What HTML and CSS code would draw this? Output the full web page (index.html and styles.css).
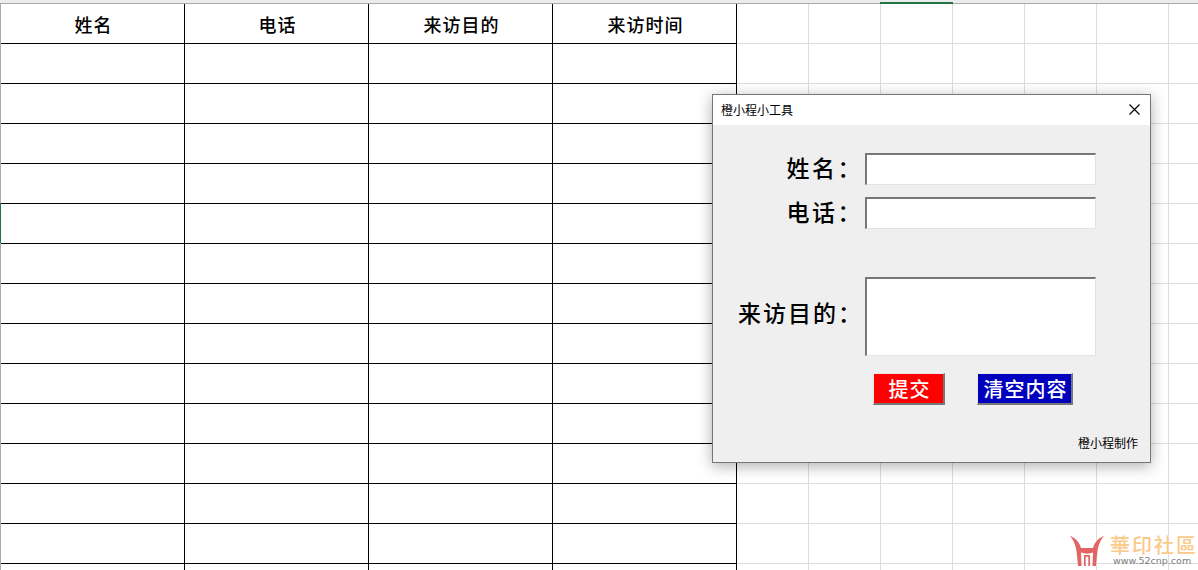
FILE: index.html
```html
<!DOCTYPE html>
<html lang="zh-CN">
<head>
<meta charset="utf-8">
<title>橙小程小工具</title>
<link rel="stylesheet" href="styles.css">
</head>
<body>
<div class="sheet">
  <div class="col-strip"><span class="col-marker"></span></div>
  <div class="sheet-body">
    <div class="row-strip"><span class="row-marker"></span></div>
    <table class="visitors">
      <thead>
        <tr><th>姓名</th><th>电话</th><th>来访目的</th><th>来访时间</th></tr>
      </thead>
      <tbody>
        <tr><td></td><td></td><td></td><td></td></tr>
        <tr><td></td><td></td><td></td><td></td></tr>
        <tr><td></td><td></td><td></td><td></td></tr>
        <tr><td></td><td></td><td></td><td></td></tr>
        <tr><td></td><td></td><td></td><td></td></tr>
        <tr><td></td><td></td><td></td><td></td></tr>
        <tr><td></td><td></td><td></td><td></td></tr>
        <tr><td></td><td></td><td></td><td></td></tr>
        <tr><td></td><td></td><td></td><td></td></tr>
        <tr><td></td><td></td><td></td><td></td></tr>
        <tr><td></td><td></td><td></td><td></td></tr>
        <tr><td></td><td></td><td></td><td></td></tr>
        <tr><td></td><td></td><td></td><td></td></tr>
        <tr><td></td><td></td><td></td><td></td></tr>
      </tbody>
    </table>
  </div>
</div>

<section class="dialog">
  <header class="dialog-title">
    <span>橙小程小工具</span>
    <svg class="close" width="11" height="11" viewBox="0 0 11 11"><path d="M.5.5l10 10M10.500.5l-10 10" stroke="#000" stroke-width="1.150" fill="none"/></svg>
  </header>
  <div class="dialog-body">
    <div class="form">
      <label class="label">姓名：</label><div class="input"></div>
      <label class="label">电话：</label><div class="input"></div>
      <label class="label label-area">来访目的：</label><div class="input area"></div>
    </div>
    <div class="actions">
      <button class="btn btn-red">提交</button>
      <button class="btn btn-blue">清空内容</button>
    </div>
    <div class="credit">橙小程制作</div>
  </div>
</section>

<div class="watermark">
  <svg class="wm-logo" width="36" height="32" viewBox="0 0 36 32">
    <path d="M1 1C6 3 10 6 12 13H24C26 6 30 3 35 1C31 6 29.500 10 28.500 16C28 21 27.500 26 27 31L23.500 31L24 17.500C20 19 16 19 12 17.500L12.500 31H9C8.500 26 8 21 7.500 16C6.500 10 5 6 1 1Z" fill="#e26464"/>
    <path d="M15 20H21V31H19.300V21.800H16.700V31H15Z" fill="#e26464"/>
  </svg>
  <div class="wm-text">
    <div class="wm-name">華印社區</div>
    <div class="wm-url">www.52cnp.com</div>
  </div>
</div>
</body>
</html>
```
FILE: styles.css
```css
* { box-sizing: border-box; }
html, body { margin: 0; padding: 0; }
body {
  width: 1198px;
  height: 570px;
  overflow: hidden;
  background: #fff;
  font-family: "Noto Sans CJK SC", "Liberation Sans", sans-serif;
  color: #000;
}
.sheet { width: 1198px; height: 570px; overflow: hidden; }
.col-strip {
  height: 4px;
  background: #ececec;
  border-bottom: 1px solid #ababab;
}
.col-marker {
  display: block;
  width: 73px;
  height: 2px;
  margin-left: 880px;
  margin-top: 2px;
  background: #217346;
  float: left;
}
.sheet-body {
  display: flex;
  height: 566px;
  background-image:
    linear-gradient(to right, #dcdcdc 1px, transparent 1px),
    linear-gradient(to bottom, #dcdcdc 1px, transparent 1px);
  background-size: 72px 40px;
  background-position: 16px 39px;
}
.row-strip { width: 1px; flex: none; background: #ababab; }
.row-marker {
  display: block;
  width: 1px;
  height: 40px;
  margin-top: 199px;
  background: #217346;
}
.visitors {
  border-collapse: separate;
  border-spacing: 0;
  table-layout: fixed;
  width: 736px;
  height: 600px;
  background: #fff;
  flex: none;
}
.visitors th, .visitors td {
  width: 184px;
  height: 40px;
  padding: 0;
  border-right: 1px solid #000;
  border-bottom: 1px solid #000;
}
.visitors th {
  padding-left: 2px;
  font-size: 18px;
  font-weight: 500;
  letter-spacing: 1px;
  text-align: center;
  line-height: 1;
}
.dialog {
  position: absolute;
  left: 712px;
  top: 94px;
  width: 439px;
  height: 369px;
  border: 1px solid #777;
  background: #efefef;
  box-shadow: 0 3px 14px rgba(0, 0, 0, .32);
}
.dialog-title {
  display: flex;
  align-items: center;
  justify-content: space-between;
  height: 30px;
  padding: 0 10px 2px 8px;
  background: #fff;
  font-size: 12px;
}
.close { display: block; }
.dialog-body { padding: 28px 12px 0 0; }
.form {
  display: grid;
  grid-template-columns: 152px 231px;
  column-gap: 0;
  row-gap: 12px;
}
.label {
  display: flex;
  align-items: center;
  justify-content: flex-end;
  font-size: 23px;
  font-weight: 500;
  letter-spacing: 2.500px;
  line-height: 1;
  white-space: nowrap;
  padding: 0 2px 3px 0;
}
.input {
  height: 32px;
  background: #fff;
  border-style: solid;
  border-width: 2px 1px 1px 2px;
  border-color: #777 #e3e3e3 #e3e3e3 #777;
}
.label-area { margin-top: 36px; padding-bottom: 9px; letter-spacing: 2px; }
.input.area { height: 79px; margin-top: 36px; }
.actions {
  display: flex;
  gap: 32px;
  margin: 17px 0 0 160px;
}
.btn {
  height: 32px;
  padding: 0 0 0 2px;
  font-family: inherit;
  font-size: 20px;
  font-weight: 500;
  letter-spacing: 1px;
  line-height: 1;
  color: #fff;
  border-style: solid;
  border-width: 1px 2px 2px 1px;
  border-color: #e8e8e8 #777 #777 #e8e8e8;
}
.btn-red { width: 72px; background: #f00; }
.btn-blue { width: 96px; background: #0000bd; }
.credit {
  margin-top: 30px;
  text-align: right;
  font-size: 12px;
  line-height: 16px;
}
.watermark {
  position: absolute;
  left: 1069px;
  top: 535px;
  display: flex;
  gap: 5px;
}
.wm-logo { display: block; filter: drop-shadow(0 0 1px #fff); }
.wm-text { width: 90px; }
.wm-name {
  font-family: "Noto Sans CJK TC", sans-serif;
  font-size: 20px;
  font-weight: 500;
  line-height: 20px;
  letter-spacing: 2px;
  color: #fbc98a;
  text-shadow: 0 0 2px #fff;
  white-space: nowrap;
}
.wm-url {
  font-family: "DejaVu Sans", sans-serif;
  font-size: 9.500px;
  line-height: 12px;
  margin-left: 3px;
  color: #7d7d7d;
  white-space: nowrap;
}
```
